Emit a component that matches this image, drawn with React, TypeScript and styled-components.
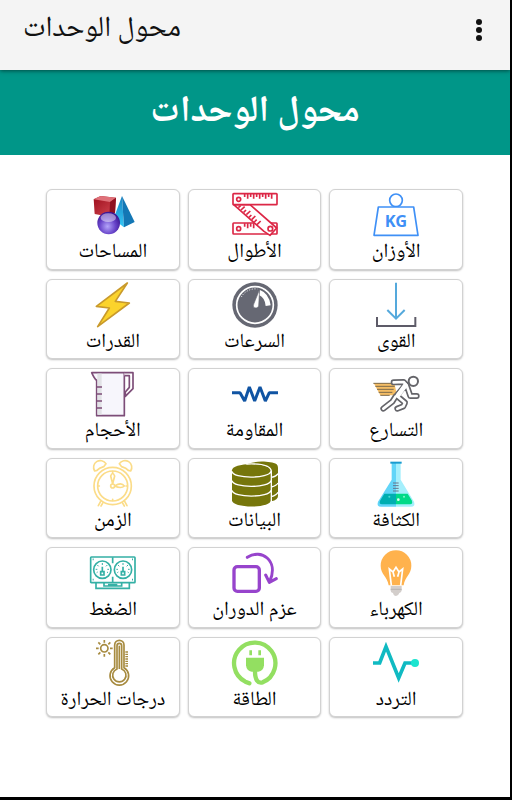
import React from "react";
import styled, { createGlobalStyle } from "styled-components";

const GlobalStyle = createGlobalStyle`
  *, *::before, *::after { box-sizing: border-box; }
  body {
    margin: 0;
    background: #000;
    color: #111;
    font-family: "Noto Naskh Arabic", "Noto Sans", sans-serif;
  }
`;

const Screen = styled.div`
  display: flex;
  flex-direction: column;
  min-height: 100vh;
  border: solid #000;
  border-width: 0 2px 3px 0;
  background: #fff;
`;

const AppBar = styled.header`
  display: flex;
  align-items: center;
  justify-content: space-between;
  height: 70px;
  padding: 0 15px 10px 23px;
  background: #f4f4f4;
  box-shadow: 0 1px 4px rgba(0, 0, 0, 0.5);
  z-index: 1;
`;

const AppTitle = styled.h1`
  margin: 0;
  font-size: 29px;
  font-weight: 400;
  line-height: 40px;
`;

const MenuButton = styled.button`
  display: flex;
  justify-content: center;
  width: 32px;
  padding: 0;
  border: 0;
  background: none;
  cursor: pointer;
`;

const Banner = styled.div`
  display: flex;
  align-items: center;
  justify-content: center;
  height: 85px;
  background: #009688;
`;

const BannerTitle = styled.h2`
  margin: 0;
  color: #fff;
  font-size: 37px;
  font-weight: 700;
  line-height: 60px;
`;

const UnitGrid = styled.main`
  flex: 1;
  display: grid;
  grid-template-columns: repeat(3, 1fr);
  grid-auto-rows: 1fr;
  gap: 9px 8px;
  padding: 34px 47px 80px 46px;
`;

const UnitCard = styled.button`
  display: flex;
  flex-direction: column;
  align-items: center;
  min-width: 0;
  padding: 2px 0 0;
  border: 1px solid #d2d2d2;
  border-radius: 6px;
  background: #fff;
  box-shadow: 0 1px 2px rgba(0, 0, 0, 0.25);
  color: #000;
  font-family: inherit;
  cursor: pointer;
`;

const UnitIcon = styled.svg`
  display: block;
  flex: none;
  width: 46px;
  height: 46px;
  overflow: visible;
`;

const UnitLabel = styled.span`
  font-size: 20px;
  line-height: 30px;
  white-space: nowrap;
`;

const Weight = () => (
  <g fill="none" stroke="#3f90f6" strokeWidth="5" strokeLinejoin="round">
    <circle cx="69" cy="25" r="19" />
    <path d="M16 45H122L135 130H3Z" fill="#fff" />
    <text x="69" y="105" textAnchor="middle" fontFamily="Noto Sans, sans-serif" fontSize="49" fontWeight="700" fill="#3f90f6" stroke="none">KG</text>
  </g>
);

const Ruler = () => (
  <g fill="#fff" stroke="#dc2746" strokeWidth="5" strokeLinejoin="round">
    <rect x="3" y="93" width="132" height="33" rx="2" />
    <path d="M38 94v10M47 94v15M56 94v10M65 94v15" />
    <path d="M5 38H54L134 108L114 130L96 118Z" />
    <path d="M19 47l7-6M27 54l11-10M35 61l7-7M43 68l12-11M51 76l7-7M59 83l11-11M67 90l7-7M75 98l11-11" />
    <rect x="3" y="5" width="132" height="33" rx="2" />
    <path d="M38 6v9M47 6v14M56 6v9M65 6v14M74 6v9M83 6v14M92 6v9M101 6v14M110 6v9M119 6v14" />
    <circle cx="20" cy="22" r="6" />
    <circle cx="20" cy="110" r="6" />
    <circle cx="115" cy="110" r="7" />
  </g>
);

const Shapes = () => (
  <g>
    <defs>
      <radialGradient id="ball" cx="0.45" cy="0.65" r="0.65">
        <stop offset="0" stopColor="#b4a5fa" />
        <stop offset="0.55" stopColor="#6743c9" />
        <stop offset="1" stopColor="#38118c" />
      </radialGradient>
      <linearGradient id="cube" x1="0" y1="0" x2="1" y2="1">
        <stop offset="0" stopColor="#9c0d1c" />
        <stop offset="1" stopColor="#d64b54" />
      </linearGradient>
      <linearGradient id="pyramid" x1="0" y1="0" x2="0" y2="1">
        <stop offset="0" stopColor="#1684c4" />
        <stop offset="1" stopColor="#35c8f6" />
      </linearGradient>
    </defs>
    <path d="M11 22L32 12L78 17L75 62L58 74L14 66Z" fill="url(#cube)" />
    <path d="M11 22L32 12L78 17L60 30Z" fill="#df7179" />
    <path d="M60 30L78 17L75 62L58 74Z" fill="#8e1020" />
    <path d="M96 12L70 82L102 106Z" fill="url(#pyramid)" />
    <path d="M96 12L134 90L102 106Z" fill="#1377b5" />
    <circle cx="56" cy="93" r="34" fill="url(#ball)" />
    <ellipse cx="55" cy="77" rx="23" ry="13" fill="#fff" opacity="0.45" />
  </g>
);

const ArrowDown = () => (
  <g fill="none" strokeWidth="6">
    <path d="M69 2V110M43 84L69 110L95 84" stroke="#55a9dc" />
    <path d="M12 105V132H127V105" stroke="#5d5b68" />
  </g>
);

const Speedometer = () => (
  <g>
    <circle cx="69" cy="69" r="68" fill="#666873" />
    <circle cx="69" cy="69" r="55" fill="none" stroke="#fff" strokeWidth="5" />
    <path d="M28 45A48 48 0 0 1 76 21" fill="none" stroke="#fff" strokeWidth="3" strokeDasharray="3 5" />
    <path d="M84 24Q111 34 116 70L101 72Q99 47 81 39Z" fill="#fff" />
    <path d="M83 22L80 73Q75 81 66 77Q62 72 66 64Z" fill="#fff" stroke="#666873" strokeWidth="2" />
  </g>
);

const Lightning = () => (
  <path d="M112 3L19 73L58 78L23 134L118 63L76 58Z" fill="#fbd32c" stroke="#c99a2c" strokeWidth="5" strokeLinejoin="round" />
);

const Runner = () => (
  <g fill="none" strokeLinecap="round" strokeLinejoin="round">
    <path d="M2 36H64L72 73H22Z" fill="#f4bd65" />
    <path d="M1 37H57M7 46H65M12 55H62M17 64H58M22 73H50" stroke="#7c6a4b" strokeWidth="3" strokeLinecap="butt" />
    <path d="M62 34L92 33L101 43L112 75H131M96 44L71 74L96 95L91 106L73 113M68 76L58 92L31 113" stroke="#65656a" strokeWidth="18" />
    <path d="M62 34L92 33L101 43L112 75H131M96 44L71 74L96 95L91 106L73 113M68 76L58 92L31 113" stroke="#fff" strokeWidth="8" />
    <path d="M97 43L76 72" stroke="#fff" strokeWidth="14" />
    <circle cx="121" cy="31" r="14" fill="#fff" stroke="#65656a" strokeWidth="6" />
  </g>
);

const Resistor = () => (
  <path d="M0 65H24L38 90L52 48L68 90L84 48L100 90L112 65H138" fill="none" stroke="#1054a3" strokeWidth="9" strokeLinejoin="bevel" />
);

const Jug = () => (
  <g stroke="#7d4d78" strokeWidth="5" strokeLinejoin="round">
    <path d="M5 5H103V134H20V28Q14 25 5 5Z" fill="#f7f6fc" />
    <path d="M22 8H35V131H22Z" fill="#e2e2e6" stroke="none" />
    <path d="M103 5H129V53L106 76V63L118 49V14H103" fill="#fff" />
    <path d="M20 48H36M20 69H36M20 90H36M20 111H36" />
  </g>
);

const Flask = () => (
  <g>
    <path d="M56 5H69V137H24Q10 137 15 122L56 56Z" fill="#62d5f8" />
    <path d="M69 5H83V56L123 122Q128 137 114 137H69Z" fill="#a5effc" />
    <path d="M34 98H69V130H27Q16 130 22 118Z" fill="#00aeb0" />
    <path d="M69 98H104L116 118Q121 130 111 130H69Z" fill="#00da88" />
    <path d="M52 5H86" stroke="#199bcf" strokeWidth="6" />
    <path d="M60 66H77M60 74H77M60 82H77M60 90H77" stroke="#68758b" strokeWidth="3" />
    <circle cx="76" cy="116" r="4" fill="#d9fff1" />
    <circle cx="49" cy="107" r="3" fill="#49ddd4" />
    <circle cx="93" cy="107" r="3" fill="#80f6cb" />
  </g>
);

const Database = () => (
  <g fill="#76760b">
    <path d="M44 10C64-1 115-1 134 10Q138 14 138 20V105Q138 117 118 121V28Q111 8 44 10Z" />
    <path d="M0 28V118C0 143 117 143 117 118V28Z" />
    <ellipse cx="58" cy="28" rx="58" ry="19" />
    <path d="M0 31C2 54 111 54 117 31M0 59C3 82 112 82 117 59M0 88C3 111 112 111 117 88M118 49Q134 46 138 38M118 78Q134 74 138 66M118 107Q134 103 138 94M43 9Q116 6 118 31V123" fill="none" stroke="#fff" strokeWidth="4" />
  </g>
);

const AlarmClock = () => (
  <g fill="none" stroke="#fbdc88" strokeWidth="5" strokeLinecap="round" strokeLinejoin="round">
    <circle cx="68" cy="75" r="56" />
    <circle cx="68" cy="75" r="45" />
    <path d="M14 30A20 20 0 1 1 48 8L41 17Q27 21 21 28ZM122 30A20 20 0 1 0 88 8L95 17Q109 21 115 28ZM32 121L25 134M104 121L111 134M39 125L33 135M97 125L103 135" />
    <path d="M68 68L62 45Q68 30 74 45ZM74 75Q94 62 103 75Q94 84 74 75Z" />
    <circle cx="68" cy="75" r="6" />
    <path d="M68 32v3M68 115v3M25 75h3M108 75h3" />
  </g>
);

const Bulb = () => (
  <g>
    <path d="M23 47A46 46 0 0 1 115 47C115 73 96 79 92 106H47C43 79 23 73 23 47Z" fill="#ffb24d" />
    <path d="M55 106L49 57L60 66L69 52L78 66L89 57L83 106M60 66L64 80M78 66L74 80" fill="none" stroke="#fff" strokeWidth="5" />
    <path d="M53 108H86V122Q84 128 79 129Q76 138 69 138Q62 138 60 129Q53 127 53 122Z" fill="#d3cecb" />
    <path d="M53 118H86" stroke="#b9b4b1" strokeWidth="3" />
  </g>
);

const Rotate = () => (
  <g fill="none" stroke="#9744cc" strokeWidth="10" strokeLinecap="round" strokeLinejoin="round">
    <rect x="6" y="50" width="76" height="74" rx="10" />
    <path d="M46 22C88-5 140 31 114 92M101 75L112 97L133 86" strokeWidth="9" />
  </g>
);

const Dial = ({ cx }: { cx: number }) => (
  <g transform={`translate(${cx} 59)`}>
    <circle r="26" />
    <path d="M-17 9L-14 7M-20-1H-15M-15-14L-11-10M0-20V-14M15-14L11-10M20-1H15M17 9L14 7" strokeWidth="3" />
    <path d="M0-9V5M-5 16V6H5V16Z" strokeWidth="5" />
  </g>
);

const Gauges = () => (
  <g fill="none" stroke="#34b0a5" strokeWidth="5">
    <rect x="2" y="21" width="133" height="77" rx="2" />
    <Dial cx={37} />
    <Dial cx={99} />
    <path d="M68 22V40M68 80V97M18 98V115H118V98M42 98V108H95V98M54 104H82" />
    <path d="M8 28h3M126 28h3M8 89h3M126 89h3" />
  </g>
);

const Pulse = () => (
  <g>
    <path d="M0 69H20L39 20L77 114L96 69H122" fill="none" stroke="#10bac2" strokeWidth="11" />
    <circle cx="126" cy="69" r="12" fill="#1ce4cf" />
  </g>
);

const Plug = () => (
  <g fill="none" stroke="#93df61" strokeWidth="13" strokeLinecap="round">
    <path d="M52 130L40 125A62 62 0 1 1 92 127C77 131 69 119 69 94" />
    <path d="M42 53H96V76Q94 94 79 95H59Q44 94 42 76Z" fill="#93df61" stroke="none" />
    <path d="M56 31V46M83 31V46" strokeWidth="8" strokeLinecap="butt" />
  </g>
);

const Thermometer = () => (
  <g fill="none" stroke="#a78b40" strokeWidth="5">
    <path d="M74 83V15A14 14 0 0 1 102 15V83A28 28 0 1 1 74 83Z" />
    <path d="M81 87V17A7 7 0 0 1 95 17V87A20 20 0 1 1 81 87Z" />
    <path d="M88 17V87" strokeWidth="5" />
    <path d="M106 36H114M106 43H114M106 50H114M106 57H114M106 64H114M106 71H114M106 78H114" strokeWidth="4" />
    <circle cx="43" cy="25" r="11" />
    <path d="M43 0V8M43 42V50M18 25H26M60 25H68M25 7L31 13M55 37L61 43M25 43L31 37M55 13L61 7" />
  </g>
);

const units: { label: string; Icon: React.ComponentType }[] = [
  { label: "الأوزان", Icon: Weight },
  { label: "الأطوال", Icon: Ruler },
  { label: "المساحات", Icon: Shapes },
  { label: "القوى", Icon: ArrowDown },
  { label: "السرعات", Icon: Speedometer },
  { label: "القدرات", Icon: Lightning },
  { label: "التسارع", Icon: Runner },
  { label: "المقاومة", Icon: Resistor },
  { label: "الأحجام", Icon: Jug },
  { label: "الكثافة", Icon: Flask },
  { label: "البيانات", Icon: Database },
  { label: "الزمن", Icon: AlarmClock },
  { label: "الكهرباء", Icon: Bulb },
  { label: "عزم الدوران", Icon: Rotate },
  { label: "الضغط", Icon: Gauges },
  { label: "التردد", Icon: Pulse },
  { label: "الطاقة", Icon: Plug },
  { label: "درجات الحرارة", Icon: Thermometer },
];

export default function App() {
  return (
    <Screen lang="ar">
      <GlobalStyle />
      <AppBar>
        <AppTitle dir="rtl">محول الوحدات</AppTitle>
        <MenuButton type="button" aria-label="القائمة">
          <svg width="8" height="24" viewBox="0 0 8 24" fill="#111" aria-hidden="true">
            <circle cx="4" cy="4" r="3" />
            <circle cx="4" cy="12" r="3" />
            <circle cx="4" cy="20" r="3" />
          </svg>
        </MenuButton>
      </AppBar>
      <Banner>
        <BannerTitle dir="rtl">محول الوحدات</BannerTitle>
      </Banner>
      <UnitGrid dir="rtl">
        {units.map(({ label, Icon }) => (
          <UnitCard type="button" key={label}>
            <UnitIcon viewBox="0 0 138 138" aria-hidden="true">
              <Icon />
            </UnitIcon>
            <UnitLabel>{label}</UnitLabel>
          </UnitCard>
        ))}
      </UnitGrid>
    </Screen>
  );
}
